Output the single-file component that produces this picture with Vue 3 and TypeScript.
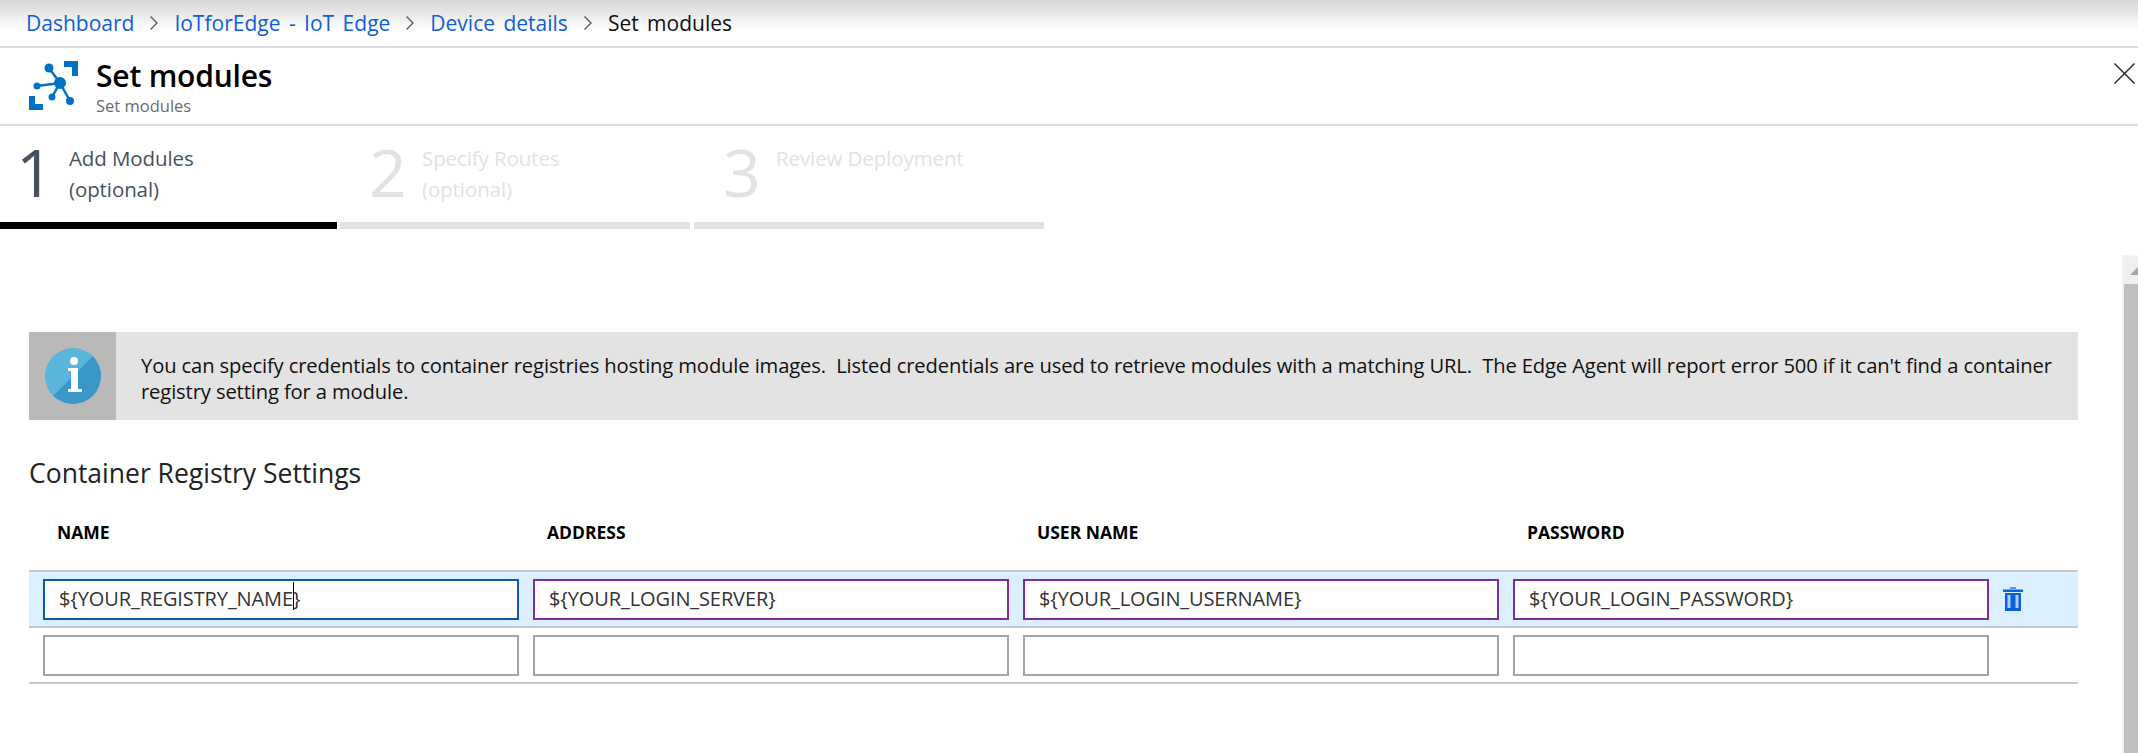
<script setup lang="ts">
interface Crumb {
  label: string
  link: boolean
}

interface Step {
  num: number
  title: string
  sub?: string
  active: boolean
}

const crumbs: Crumb[] = [
  { label: 'Dashboard', link: true },
  { label: 'IoTforEdge - IoT Edge', link: true },
  { label: 'Device details', link: true },
  { label: 'Set modules', link: false }
]

const steps: Step[] = [
  { num: 1, title: 'Add Modules', sub: '(optional)', active: true },
  { num: 2, title: 'Specify Routes', sub: '(optional)', active: false },
  { num: 3, title: 'Review Deployment', active: false }
]

const columns = ['NAME', 'ADDRESS', 'USER NAME', 'PASSWORD']
const values = ['${YOUR_LOGIN_SERVER}', '${YOUR_LOGIN_USERNAME}', '${YOUR_LOGIN_PASSWORD}']
</script>

<template>
  <div class="page">
    <nav class="crumbs">
      <template v-for="(c, i) in crumbs" :key="c.label">
        <svg v-if="i > 0" class="chev" width="10" height="16" viewBox="0 0 10 16">
          <path d="M1.5 1.5 8 8l-6.500 6.500" fill="none" stroke="#555" stroke-width="1.300" />
        </svg>
        <span :class="{ link: c.link }">{{ c.label }}</span>
      </template>
    </nav>

    <header class="head">
      <svg class="logo" width="50" height="49" viewBox="0 0 50 49">
        <path d="M35 0h14v15h-6V6h-8zM0 35h6v8h8v6H0z" fill="#0072c6" />
        <path d="M31 22 20 7M31 22 8 25M31 22 23 36M31 22 41 40" stroke="#0072c6" stroke-width="2.500" fill="none" />
        <circle cx="31" cy="22" r="6" fill="#0072c6" />
        <circle cx="20" cy="7" r="4.500" fill="#0072c6" />
        <circle cx="8" cy="25" r="3.500" fill="#0072c6" />
        <circle cx="23" cy="36" r="3.500" fill="#0072c6" />
        <circle cx="41" cy="40" r="4" fill="#0072c6" />
      </svg>
      <div class="head-text">
        <h1>Set modules</h1>
        <p>Set modules</p>
      </div>
      <svg class="close" width="21" height="21" viewBox="0 0 21 21">
        <path d="M.5.5l20 20M20.500.5l-20 20" stroke="#222" stroke-width="1.400" fill="none" />
      </svg>
    </header>

    <div class="steps">
      <div v-for="s in steps" :key="s.num" class="step" :class="{ active: s.active }">
        <div class="step-body">
          <span class="step-num">{{ s.num }}</span>
          <div class="step-text">
            <div>{{ s.title }}</div>
            <div v-if="s.sub">{{ s.sub }}</div>
          </div>
        </div>
        <div class="step-bar"></div>
      </div>
    </div>

    <main class="content">
      <div class="info">
        <div class="info-icon">
          <svg width="56" height="56" viewBox="0 0 56 56">
            <circle cx="28" cy="28" r="28" fill="#5ab5dc" />
            <path d="M47.800 8.200A28 28 0 0 1 8.200 47.800z" fill="#3a98c8" />
            <circle cx="29" cy="13" r="4" fill="#fff" />
            <path d="M23 20h10v21h4v3H23v-3h3V23h-3z" fill="#fff" />
          </svg>
        </div>
        <p class="info-text">You can specify credentials to container registries hosting module images.&nbsp; Listed credentials are used to retrieve modules with a matching URL.&nbsp; The Edge Agent will report error 500 if it can't find a container registry setting for a module.</p>
      </div>

      <h2>Container Registry Settings</h2>

      <div class="grid-head">
        <span v-for="c in columns" :key="c">{{ c }}</span>
      </div>

      <div class="row filled">
        <div class="field focus">${YOUR_REGISTRY_NAME<span class="caret"></span>}</div>
        <div v-for="v in values" :key="v" class="field dirty">{{ v }}</div>
        <svg class="trash" width="20" height="24" viewBox="0 0 20 24">
          <rect x="7" y="0" width="6" height="2" fill="#5b96e6" />
          <rect x="0" y="2.500" width="20" height="2.500" fill="#0b62d8" />
          <path d="M2 6h16v18H2z" fill="#0b62d8" />
          <path d="M4.500 8h3v13h-3zM12.500 8h3v13h-3z" fill="#a9cdf5" />
        </svg>
      </div>
      <div class="row">
        <div v-for="n in 4" :key="n" class="field"></div>
      </div>
    </main>

    <div class="scrollbar">
      <div class="scroll-up"><span></span></div>
      <div class="scroll-thumb"></div>
    </div>
  </div>
</template>

<style>
html,
body {
  margin: 0;
  background: #fff;
  overflow: hidden;
}
</style>

<style scoped>
.page {
  position: relative;
  width: 2138px;
  height: 753px;
  overflow: hidden;
  font-family: "Open Sans", "Liberation Sans", sans-serif;
  color: #111;
}

.crumbs {
  display: flex;
  align-items: center;
  gap: 15px;
  height: 48px;
  box-sizing: border-box;
  padding-left: 26px;
  font-size: 21px;
  word-spacing: 3px;
  background: linear-gradient(#d6d6d6, #fff 30px);
  border-bottom: 2px solid #dcdcdc;
}

.crumbs .link {
  color: #0f5fd7;
}

.head {
  display: flex;
  align-items: center;
  height: 78px;
  box-sizing: border-box;
  border-bottom: 2px solid #dcdcdc;
  position: relative;
}

.logo {
  margin: -2px 17px 0 29px;
}

.head-text h1 {
  margin: 0 0 1px;
  font-size: 30px;
  line-height: 38px;
  font-weight: 600;
  letter-spacing: -0.2px;
  color: #000;
}

.head-text p {
  margin: 0;
  font-size: 16.500px;
  line-height: 20px;
  color: #6b6b6b;
}

.close {
  position: absolute;
  top: 15px;
  right: 3px;
}

.steps {
  display: flex;
  gap: 3px;
}

.step {
  width: 350px;
  color: #e3e3e3;
}

.step:first-child {
  width: 337px;
}

.step:last-child {
  margin-left: 1px;
}

.step.active {
  color: #47515e;
}

.step-body {
  display: flex;
  height: 96px;
  box-sizing: border-box;
  padding-left: 16px;
}

.step:not(:first-child) .step-body {
  padding-left: 29px;
}

.step-num {
  font-size: 66px;
  font-weight: 400;
  line-height: 90px;
  width: 53px;
}

.step-text {
  font-size: 20.500px;
  line-height: 31px;
  letter-spacing: -0.1px;
  padding-top: 17px;
}

.step-bar {
  height: 7px;
  background: #e3e3e3;
}

.step.active .step-bar {
  background: #000;
}

.content {
  padding: 103px 60px 0 29px;
}

.info {
  display: flex;
  height: 88px;
  background: #e3e3e3;
}

.info-icon {
  display: flex;
  align-items: center;
  justify-content: center;
  width: 87px;
  background: #b9b9b9;
  flex-shrink: 0;
}

.info-text {
  margin: 20px 20px 0 25px;
  font-size: 20.200px;
  line-height: 26px;
  letter-spacing: -0.13px;
  color: #111;
}

h2 {
  margin: 37px 0 0;
  font-size: 26.500px;
  line-height: 32px;
  font-weight: 400;
  color: #222;
}

.grid-head {
  display: flex;
  height: 81px;
  box-sizing: border-box;
  padding: 31px 0 0 28px;
  font-size: 17.500px;
  line-height: 24px;
  font-weight: 700;
  color: #000;
}

.grid-head span {
  width: 490px;
  flex-shrink: 0;
}

.row {
  display: flex;
  gap: 14px;
  height: 56px;
  box-sizing: border-box;
  padding: 7px 0 0 14px;
  border-bottom: 2px solid #c8c8c8;
}

.row.filled {
  background: #dcefff;
  border-top: 2px solid #c8c8c8;
  height: 58px;
}

.field {
  width: 476px;
  height: 41px;
  box-sizing: border-box;
  border: 2px solid #a5a5a5;
  background: #fff;
  padding: 0 14px;
  font-size: 20px;
  line-height: 36px;
  letter-spacing: -0.1px;
  color: #333;
  white-space: nowrap;
}

.field.focus {
  border-color: #0a5cab;
}

.field.dirty {
  border-color: #7f2aa0;
}

.caret {
  position: relative;
}

.caret::after {
  content: "";
  position: absolute;
  left: 0;
  top: -3px;
  width: 1px;
  height: 28px;
  background: #000;
}

.trash {
  margin: 8px 0 0 0;
}

.scrollbar {
  position: absolute;
  top: 255px;
  right: 0;
  bottom: 0;
  width: 16px;
  background: #f0f0f0;
}

.scroll-up {
  height: 29px;
  overflow: hidden;
  position: relative;
}

.scroll-up span {
  position: absolute;
  left: 8px;
  top: 12px;
  border-left: 8px solid transparent;
  border-right: 8px solid transparent;
  border-bottom: 8px solid #a6a6a6;
}

.scroll-thumb {
  height: 100%;
  margin-left: 2px;
  background: #bfbfbf;
}
</style>
